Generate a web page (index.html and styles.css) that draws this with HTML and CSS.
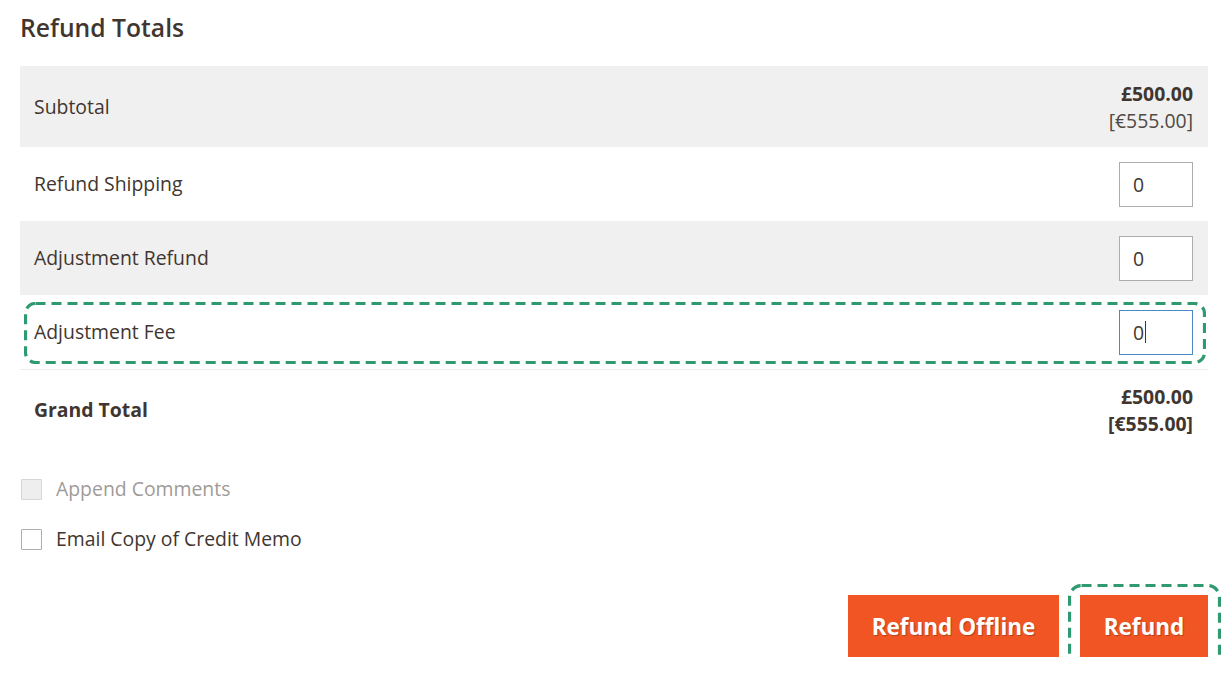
FILE: index.html
```html
<!DOCTYPE html>
<html>
<head>
<meta charset="utf-8">
<link rel="stylesheet" href="styles.css">
</head>
<body>
<div class="page">
  <h2 class="title">Refund Totals</h2>
  <div class="totals">
    <div class="row alt">
      <div class="label">Subtotal</div>
      <div class="amount"><strong>£500.00</strong><span>[€555.00]</span></div>
    </div>
    <div class="row">
      <div class="label">Refund Shipping</div>
      <input class="field" type="text" value="0">
    </div>
    <div class="row alt">
      <div class="label">Adjustment Refund</div>
      <input class="field" type="text" value="0">
    </div>
    <div class="row last">
      <div class="label">Adjustment Fee</div>
      <div class="field focus">0<span class="caret"></span></div>
      <svg class="mark mark-row" width="1182" height="62" viewBox="0 0 1182 62"><rect x="1.5" y="1.5" width="1179" height="59" rx="10" ry="10" fill="none" stroke="#2f9a6f" stroke-width="3.2" stroke-dasharray="10 6"/></svg>
    </div>
    <div class="row grand">
      <div class="label">Grand Total</div>
      <div class="amount"><strong>£500.00</strong><strong>[€555.00]</strong></div>
    </div>
  </div>
  <div class="checks">
    <label class="check disabled"><span class="box"></span>Append Comments</label>
    <label class="check"><span class="box"></span>Email Copy of Credit Memo</label>
  </div>
  <div class="actions">
    <button class="btn">Refund Offline</button>
    <div class="btn-wrap">
      <button class="btn btn-small">Refund</button>
      <svg class="mark mark-btn" width="153" height="85" viewBox="0 0 153 85"><rect x="1.5" y="1.5" width="150" height="82" rx="12" ry="12" fill="none" stroke="#2f9a6f" stroke-width="3.2" stroke-dasharray="10 6"/></svg>
    </div>
  </div>
</div>
</body>
</html>
```

FILE: styles.css
```css
* { box-sizing: border-box; }
html, body { margin: 0; padding: 0; background: #fff; }
body {
  font-family: "Open Sans", "Liberation Sans", sans-serif;
  color: #41362f;
  font-size: 19.4px;
}
.page {
  padding: 0 21px 0 20px;
}
.title {
  margin: 0;
  padding-top: 13px;
  height: 66px;
  font-size: 24.7px;
  line-height: 30px;
  font-weight: 600;
  color: #41362f;
}
.totals {
  display: flex;
  flex-direction: column;
}
.row {
  position: relative;
  display: flex;
  align-items: center;
  justify-content: space-between;
  padding: 0 15px 0 14px;
  height: 74px;
  background: #fff;
}
.row.alt { background: #f0f0f0; }
.row:first-child { height: 81px; }
.row.last { height: 75px; border-bottom: 1px solid #ececec; }
.row.grand { height: 84px; padding-bottom: 4px; }
.label {
  line-height: 26px;
  color: #41362f;
}
.grand .label { font-weight: 700; }
.amount {
  display: flex;
  flex-direction: column;
  align-items: flex-end;
  line-height: 27px;
}
.amount strong { font-weight: 700; }
.amount span { color: #514943; }
.field {
  display: block;
  width: 74px;
  height: 45px;
  border: 1px solid #adadad;
  background: #fff;
  padding: 0 0 0 13px;
  font-family: inherit;
  font-size: 19.4px;
  color: #41362f;
  line-height: 43px;
  outline: none;
}
.field.focus {
  border-color: #4a8bc7;
  display: flex;
  align-items: center;
}
.caret {
  display: inline-block;
  width: 1px;
  height: 22px;
  background: #41362f;
  margin-left: 1px;
}
.mark {
  position: absolute;
  pointer-events: none;
}
.mark-row { left: 4px; top: 7px; }
.checks {
  display: flex;
  flex-direction: column;
  gap: 28px;
  padding-top: 24px;
}
.check {
  display: flex;
  align-items: center;
  gap: 14px;
  line-height: 22px;
  margin-left: 1px;
  color: #41362f;
}
.check .box {
  width: 21px;
  height: 21px;
  border: 1px solid #adadad;
  background: #fff;
  border-radius: 1px;
}
.check.disabled { color: #a09b98; }
.check.disabled .box { background: #eeeeee; border-color: #d6d6d6; }
.actions {
  display: flex;
  justify-content: flex-end;
  gap: 21px;
  padding-top: 45px;
}
.btn-wrap { position: relative; }
.btn {
  display: block;
  width: 211px;
  height: 62px;
  border: 0;
  background: #f05523;
  color: #fff;
  font-family: inherit;
  font-size: 22.5px;
  font-weight: 700;
  text-shadow: 1px 1px 1px rgba(0,0,0,0.25);
  padding: 0;
}
.btn-small { width: 128px; }
.mark-btn { left: -12px; top: -11px; }
```
